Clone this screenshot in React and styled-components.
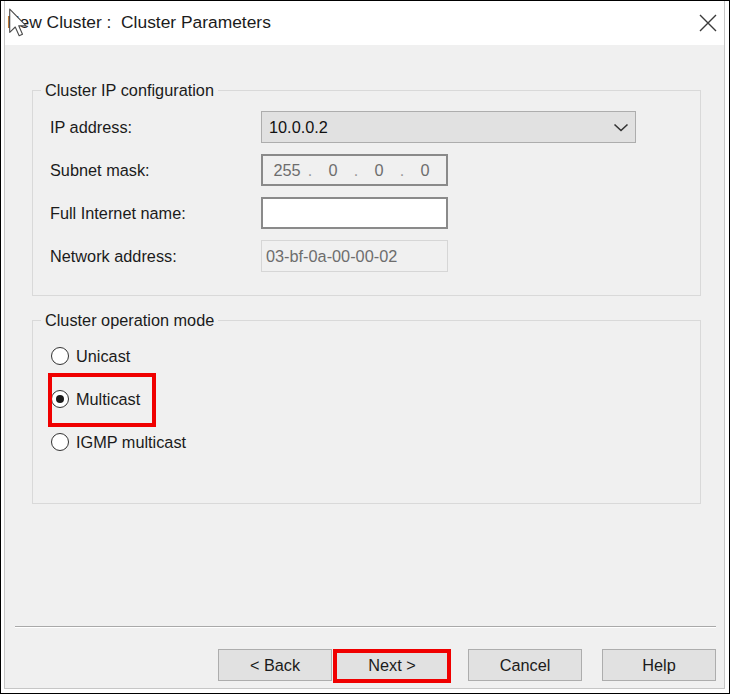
import React from "react";
import styled, { createGlobalStyle } from "styled-components";

const GlobalStyle = createGlobalStyle`
  html, body { margin: 0; padding: 0; background: #fff; }
  body { font-family: "Liberation Sans", Arial, sans-serif; }
  *, *::before, *::after { box-sizing: border-box; }
`;

const Frame = styled.div`
  width: 730px;
  height: 694px;
  border: 1px solid #000;
  padding: 0 4px 4px 3px;
  background: #fff;
`;

const Window = styled.div`
  height: 100%;
  border: 1px solid #c6c6c6;
  border-top: none;
  display: flex;
  flex-direction: column;
`;

const TitleBar = styled.div`
  position: relative;
  height: 44px;
  flex: none;
  background: #fff;
  display: flex;
  align-items: center;
  justify-content: space-between;
  padding: 0 7px 0 2px;
`;

const Title = styled.div`
  font-size: 17.4px;
  color: #1b1b1b;
  white-space: pre;
  margin-top: -1px;
`;

const CursorIcon = styled.svg`
  position: absolute;
  left: 4px;
  top: 7px;
`;

const Body = styled.div`
  flex: 1;
  background: #f0f0f0;
  display: flex;
  flex-direction: column;
`;

const Content = styled.div`
  padding: 35px 23px 0 27px;
  display: flex;
  flex-direction: column;
  gap: 14px;
`;

const Group = styled.fieldset`
  margin: 0;
  border: 1px solid #d9d9d9;
  padding: ${(p) => p.$pad};
  min-width: 0;
`;

const Legend = styled.legend`
  margin-left: 8px;
  padding: 0 4px;
  font-size: 16.3px;
  line-height: 20px;
  color: #1b1b1b;
`;

const FormGrid = styled.div`
  display: grid;
  grid-template-columns: 211px auto;
  row-gap: 11px;
  align-items: center;
  padding-left: 17px;
`;

const Label = styled.div`
  font-size: 16.3px;
  color: #1b1b1b;
`;

const Combo = styled.div`
  width: 375px;
  height: 32px;
  background: #e1e1e1;
  border: 1px solid #adadad;
  display: flex;
  align-items: center;
  justify-content: space-between;
  padding: 0 6px 0 7px;
  font-size: 16.3px;
  color: #111;
`;

const Field = styled.div`
  width: 187px;
  height: 32px;
  display: flex;
  align-items: center;
  font-size: 16.3px;
  background: ${(p) => (p.$disabled ? "#f0f0f0" : "#fff")};
  border: ${(p) => (p.$light ? "1px solid #d6d6d6" : "2px solid #8a8a8a")};
  color: #6d6d6d;
  padding-left: ${(p) => p.$padLeft || 4}px;
`;

const IpSeg = styled.span`
  width: 38px;
  text-align: center;
`;

const IpDot = styled.span`
  width: 8px;
  text-align: center;
  color: #9a9a9a;
`;

const RadioList = styled.div`
  display: flex;
  flex-direction: column;
  align-items: flex-start;
  gap: 19px;
  padding-left: 18px;
`;

const RadioItem = styled.div`
  position: relative;
  height: 24px;
  display: inline-flex;
  align-items: center;
  gap: 7px;
  font-size: 16.3px;
  color: #1b1b1b;

  ${(p) =>
    p.$marked &&
    `
    &::after {
      content: "";
      position: absolute;
      left: -3px;
      top: -14px;
      width: 108px;
      height: 54px;
      border: 4px solid #f00000;
    }
  `}
`;

const RadioCircle = styled.span`
  width: 18px;
  height: 18px;
  border-radius: 50%;
  border: 1.5px solid #333;
  background: #fff;
  display: flex;
  align-items: center;
  justify-content: center;

  &::before {
    content: "";
    width: 8px;
    height: 8px;
    border-radius: 50%;
    background: ${(p) => (p.$checked ? "#1a1a1a" : "transparent")};
  }
`;

const Footer = styled.div`
  margin-top: auto;
  padding: 0 8px 7px 10px;
  display: flex;
  flex-direction: column;
`;

const Separator = styled.div`
  border-top: 1px solid #a9a9a9;
  border-bottom: 1px solid #fff;
`;

const ButtonRow = styled.div`
  margin-top: 21px;
  display: flex;
  justify-content: flex-end;
`;

const Button = styled.button`
  position: relative;
  width: 114px;
  height: 32px;
  margin-left: ${(p) => p.$gap}px;
  background: #e1e1e1;
  border: 1px solid #adadad;
  font-family: "Liberation Sans", Arial, sans-serif;
  font-size: 16.3px;
  color: #1b1b1b;
  padding: 0;

  ${(p) =>
    p.$marked &&
    `
    &::after {
      content: "";
      position: absolute;
      left: -3px;
      top: -1px;
      right: -3px;
      bottom: -3px;
      border: 4.5px solid #f00000;
    }
  `}
`;

const Cursor = () => (
  <CursorIcon width="18" height="29" viewBox="0 0 12.4 19.4">
    <path
      d="M0.5 0.5 L0.5 16.5 L4.3 12.8 L7 18.8 L9.3 17.8 L6.7 12 L11.8 12 Z"
      fill="#fff"
      stroke="#4a4a4a"
      strokeWidth="0.75"
      strokeLinejoin="round"
    />
  </CursorIcon>
);

const CloseIcon = () => (
  <svg width="18" height="18" viewBox="0 0 18 18">
    <path d="M1 1 L17 17 M17 1 L1 17" stroke="#3a3a3a" strokeWidth="1.4" />
  </svg>
);

const Chevron = () => (
  <svg width="16" height="9" viewBox="0 0 16 9">
    <path d="M1.5 1.5 L8 7.5 L14.5 1.5" fill="none" stroke="#333" strokeWidth="1.6" />
  </svg>
);

export default function App() {
  return (
    <>
      <GlobalStyle />
      <Frame>
        <Window>
          <TitleBar>
            <Title>New Cluster :  Cluster Parameters</Title>
            <CloseIcon />
            <Cursor />
          </TitleBar>
          <Body>
            <Content>
              <Group $pad="11px 0 23px 0">
                <Legend>Cluster IP configuration</Legend>
                <FormGrid>
                  <Label>IP address:</Label>
                  <Combo>
                    <span>10.0.0.2</span>
                    <Chevron />
                  </Combo>
                  <Label>Subnet mask:</Label>
                  <Field $disabled $padLeft={5}>
                    <IpSeg>255</IpSeg>
                    <IpDot>.</IpDot>
                    <IpSeg>0</IpSeg>
                    <IpDot>.</IpDot>
                    <IpSeg>0</IpSeg>
                    <IpDot>.</IpDot>
                    <IpSeg>0</IpSeg>
                  </Field>
                  <Label>Full Internet name:</Label>
                  <Field />
                  <Label>Network address:</Label>
                  <Field $disabled $light>03-bf-0a-00-00-02</Field>
                </FormGrid>
              </Group>
              <Group $pad="14px 0 49px 0">
                <Legend>Cluster operation mode</Legend>
                <RadioList>
                  <RadioItem>
                    <RadioCircle />
                    Unicast
                  </RadioItem>
                  <RadioItem $marked>
                    <RadioCircle $checked />
                    Multicast
                  </RadioItem>
                  <RadioItem>
                    <RadioCircle />
                    IGMP multicast
                  </RadioItem>
                </RadioList>
              </Group>
            </Content>
            <Footer>
              <Separator />
              <ButtonRow>
                <Button $gap={0}>&lt; Back</Button>
                <Button $gap={3} $marked>Next &gt;</Button>
                <Button $gap={19}>Cancel</Button>
                <Button $gap={20}>Help</Button>
              </ButtonRow>
            </Footer>
          </Body>
        </Window>
      </Frame>
    </>
  );
}
